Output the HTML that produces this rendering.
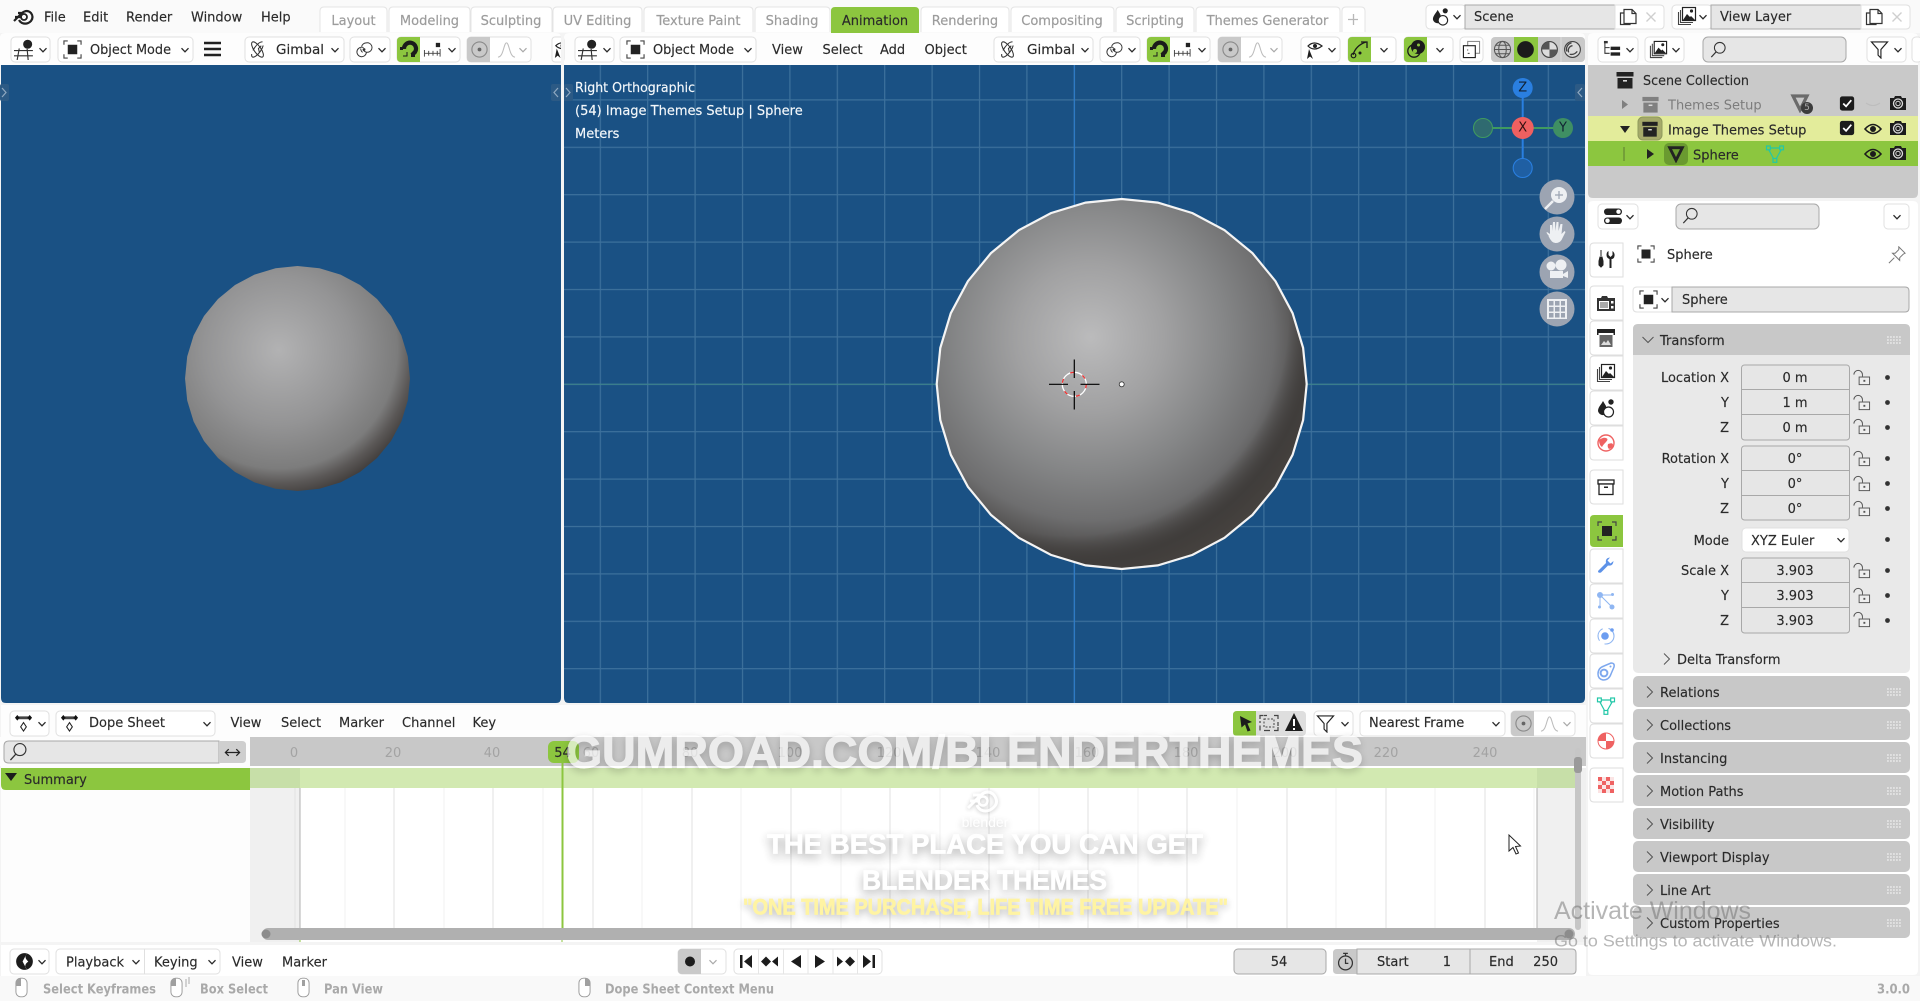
<!DOCTYPE html>
<html lang="en"><head><meta charset="utf-8"><title>Blender</title>
<style>
html,body{margin:0;padding:0;background:#f4f4f4;width:1920px;height:1001px;overflow:hidden}
svg.page{position:absolute;left:0;top:0;filter:blur(.3px)}
text{font-family:"DejaVu Sans","Liberation Sans",sans-serif;font-size:13px;fill:#2a2a2a;dominant-baseline:central;stroke:#2a2a2a;stroke-width:.15;transform:translate(0,1.3px)}
.g{fill:#a0a0a0}.tab{fill:#9c9c9c;stroke:#9c9c9c;stroke-width:.2}.w{fill:#f4f8fb;stroke:#f4f8fb}.m{text-anchor:middle}.e{text-anchor:end}
.st{fill:#a9a9a9;stroke:none}.n{fill:#a3a3a3;stroke:none;text-anchor:middle}
.ns{stroke:none}
.nt{transform:none}
.b{fill:#fff;stroke:#e0e0e0;stroke-width:1}
.f{fill:#e6e6e6;stroke:#a8a8a8;stroke-width:1}
.p{fill:#c8c8c8}.pg{fill:#8cc63f}.gy{fill:#c9c9c9}
.s{fill:none;stroke:#2a2a2a;stroke-width:1.3}
.wm{font-family:"Liberation Sans",sans-serif;font-weight:bold;fill:#fff;stroke:#fff;stroke-width:.7;filter:drop-shadow(0 3px 4px rgba(0,0,0,.3));transform:none}
</style></head><body>
<svg class="page" width="1920" height="1001" viewBox="0 0 1920 1001" xmlns="http://www.w3.org/2000/svg">
<defs>
<pattern id="grid" patternUnits="userSpaceOnUse" x="1073.7" y="383.7" width="47.4" height="47.4"><rect width="1.2" height="47.4" fill="#3d719c"/><rect width="47.4" height="1.2" fill="#3d719c"/></pattern>
<radialGradient id="sph" cx=".416" cy=".373" r=".66"><stop offset="0" stop-color="#bbbbbc"/><stop offset=".3" stop-color="#a1a1a2"/><stop offset=".55" stop-color="#858687"/><stop offset=".75" stop-color="#6e6e6f"/><stop offset=".88" stop-color="#4d4b4a"/><stop offset="1" stop-color="#373431"/></radialGradient>
<radialGradient id="sph2" cx=".36" cy=".32" r=".72"><stop offset=".82" stop-color="#3b3836" stop-opacity="0"/><stop offset=".92" stop-color="#3f3c3a" stop-opacity=".92"/><stop offset="1" stop-color="#46423f"/></radialGradient>
<radialGradient id="sphL" cx=".416" cy=".373" r=".66"><stop offset="0" stop-color="#b2b2b3"/><stop offset=".5" stop-color="#949495"/><stop offset=".8" stop-color="#7c7c7c"/><stop offset=".9" stop-color="#5a5756"/><stop offset="1" stop-color="#3f3b39"/></radialGradient>
<polygon id="gon" points="185,0 181.4,36.1 170.9,70.8 153.8,102.8 130.8,130.8 102.8,153.8 70.8,170.9 36.1,181.4 0,185 -36.1,181.4 -70.8,170.9 -102.8,153.8 -130.8,130.8 -153.8,102.8 -170.9,70.8 -181.4,36.1 -185,0 -181.4,-36.1 -170.9,-70.8 -153.8,-102.8 -130.8,-130.8 -102.8,-153.8 -70.8,-170.9 -36.1,-181.4 0,-185 36.1,-181.4 70.8,-170.9 102.8,-153.8 130.8,-130.8 153.8,-102.8 170.9,-70.8 181.4,-36.1"/>
<path id="gl" d="M4 0h19v25h-19q-4 0-4-4v-17q0-4 4-4z"/>
<path id="tabp" d="M33 0h-29q-4 0-4 4v26q0 4 4 4h29z" fill="#fff" stroke="#dedede"/>
<symbol id="ch" viewBox="0 0 10 10"><path d="M1.5 3.2 5 6.8 8.5 3.2" fill="none" stroke="#2a2a2a" stroke-width="1.3"/></symbol>
<symbol id="chg" viewBox="0 0 10 10"><path d="M1.5 3.2 5 6.8 8.5 3.2" fill="none" stroke="#a9a9a9" stroke-width="1.2"/></symbol>
<symbol id="cr" viewBox="0 0 12 12"><path d="M3 .5 8.5 6 3 11.5" fill="none" stroke="#555" stroke-width="1"/></symbol>
<symbol id="cd" viewBox="0 0 12 12"><path d="M.5 3 6 8.5 11.5 3" fill="none" stroke="#555" stroke-width="1"/></symbol>
<symbol id="obj" viewBox="0 0 20 20"><rect x="5" y="5" width="10" height="10" fill="#222"/><path d="M1 5V1h4M15 1h4v4M19 15v4h-4M5 19H1v-4" fill="none" stroke="#444" stroke-width="1.2"/></symbol>
<symbol id="e3d" viewBox="0 0 20 20"><circle cx="13" cy="5" r="4.300" fill="#222"/><path d="M0 11h18M0 16h18M5 9 3 20M12.500 9.500l1 10.500" fill="none" stroke="#333" stroke-width="1.100"/></symbol>
<symbol id="gim" viewBox="0 0 20 20"><g fill="none" stroke="#333" stroke-width="1.1"><ellipse cx="10" cy="10" rx="3.6" ry="9.500" transform="rotate(-35 10 10)"/><ellipse cx="10" cy="10" rx="3.6" ry="9.500" transform="rotate(35 10 10)" stroke-dasharray="14 4"/><path d="M14 6 11 9l1 4"/></g></symbol>
<symbol id="piv" viewBox="0 0 20 20"><g fill="none" stroke="#333" stroke-width="1"><path d="M9 8A5 5 0 1 0 12 13"/><path d="M8 13A5 5 0 0 1 6 9M9 11a5 5 0 1 0 3-8 5 5 0 0 0-5 4"/></g><circle cx="9.500" cy="10" r="1.500" fill="#333"/></symbol>
<symbol id="mag" viewBox="0 0 20 20"><path d="M5 10a6 6 0 1 1 11 3l-3 3" fill="none" stroke="#1b1b1b" stroke-width="4.200"/><path d="M1 8h3v3H1zM12 14h4v4h-4z" fill="#1b1b1b"/><path d="M4 17h4v-4" fill="none" stroke="#1b1b1b" stroke-width="1"/></symbol>
<symbol id="inc" viewBox="0 0 20 20"><path d="M1 14h17M1.500 10.500v7M6 11.500v5M10.500 11.500v5M15 11.500v5M18 9.500v8" fill="none" stroke="#444" stroke-width="1"/><rect x="13.500" y="3" width="4.500" height="4.500" fill="#222"/></symbol>
<symbol id="pd" viewBox="0 0 20 20"><circle cx="10" cy="10" r="8" fill="none" stroke="#8a8a8a" stroke-width="1.200"/><circle cx="10" cy="10" r="2" fill="#666"/></symbol>
<symbol id="cur" viewBox="0 0 20 20"><path d="M1 18C7 18 7 3 10 3s3 15 9 15" fill="none" stroke="#bcbcbc" stroke-width="1.100"/></symbol>
<symbol id="eye0" viewBox="0 0 20 20"><path d="M5 9 3 19l3-2.500 3 2.500z" fill="#1e1e1e"/><path d="M4 6q6-6 14 0-8 6-14 0z" fill="#fff" stroke="#222" stroke-width="1.200"/><circle cx="11" cy="6" r="2" fill="#222"/></symbol>
<symbol id="giz" viewBox="0 0 20 20"><path d="M3 16C5 9 10 5 16 3" fill="none" stroke="#1b1b1b" stroke-width="1.300"/><path d="M11 3h6v6" fill="none" stroke="#1b1b1b" stroke-width="1.300"/><circle cx="3.500" cy="16.500" r="2.300" fill="none" stroke="#1b1b1b" stroke-width="1.200"/><circle cx="10" cy="14" r="1.500" fill="#1b1b1b"/></symbol>
<symbol id="ovl" viewBox="0 0 20 20"><circle cx="12" cy="8" r="7" fill="#1b1b1b"/><circle cx="8" cy="12" r="6.200" fill="none" stroke="#1b1b1b" stroke-width="1.300"/><circle cx="12.500" cy="6" r="1.500" fill="#8cc63f"/><circle cx="9" cy="12" r="2" fill="#8cc63f"/></symbol>
<symbol id="xr" viewBox="0 0 20 20"><rect x="6" y="1.500" width="12.500" height="12.500" fill="none" stroke="#888" stroke-width="1.100"/><rect x="1.500" y="6" width="12.500" height="12.500" fill="#fff" stroke="#222" stroke-width="1.200"/><path d="M6 10v1M6 14h2" stroke="#222"/></symbol>
<symbol id="sw" viewBox="0 0 20 20"><g fill="none" stroke="#555" stroke-width="1.100"><circle cx="10" cy="10" r="8.500"/><ellipse cx="10" cy="10" rx="4" ry="8.500"/><path d="M1.500 10h17M3 5.500h14M3 14.500h14"/></g></symbol>
<symbol id="ss" viewBox="0 0 20 20"><circle cx="10" cy="10" r="8.800" fill="#1b1b1b"/></symbol>
<symbol id="sm" viewBox="0 0 20 20"><circle cx="10" cy="10" r="8.300" fill="#dcdcdc" stroke="#444" stroke-width="1.200"/><path d="M10 1.700A8.300 8.300 0 0 0 1.700 10H10zM10 10h8.300A8.300 8.300 0 0 1 10 18.300z" fill="#555"/></symbol>
<symbol id="sr" viewBox="0 0 20 20"><circle cx="10" cy="10" r="8.300" fill="#ddd" stroke="#444" stroke-width="1.200"/><path d="M4 12a7 7 0 0 1 5-9M6 13a5 5 0 0 1 4-7M7 15a8 8 0 0 0 8-3" fill="none" stroke="#444" stroke-width="1.400"/></symbol>
<symbol id="sce" viewBox="0 0 20 20"><path d="M7 3C5 7 2 9 2 13a5 5 0 0 0 8 3V8z" fill="#222"/><circle cx="15" cy="4" r="2.700" fill="#222"/><circle cx="12.500" cy="14" r="5" fill="#fff" stroke="#222" stroke-width="1.200"/></symbol>
<symbol id="cp" viewBox="0 0 20 20"><path d="M6 2.500h8l4 4v10h-12zM14 2.500v4h4M6 6H2.500v11.500H12V17" fill="#fff" stroke="#333" stroke-width="1.200"/></symbol>
<symbol id="x" viewBox="0 0 20 20"><path d="M5 5l10 10M15 5 5 15" stroke="#cfcfcf" stroke-width="1.500"/></symbol>
<symbol id="vl" viewBox="0 0 20 20"><path d="M1.500 6v12.500H14M3.500 4v12.500H16" fill="none" stroke="#444" stroke-width="1.100"/><rect x="5.500" y="1.500" width="13" height="13" fill="#fff" stroke="#222" stroke-width="1.200"/><path d="M6 14l4-6 3 3 1-1 4 4z" fill="#222"/><circle cx="14.500" cy="5" r="1.600" fill="#222"/></symbol>
<symbol id="srch" viewBox="0 0 20 20"><circle cx="11.500" cy="8" r="6.300" fill="none" stroke="#333" stroke-width="1.200"/><path d="M7 13 1.500 19" stroke="#333" stroke-width="1.400"/></symbol>
<symbol id="flt" viewBox="0 0 20 20"><path d="M1.500 2h17l-7 8v9l-3-3v-6z" fill="#fff" stroke="#222" stroke-width="1.200"/></symbol>
<symbol id="otl" viewBox="0 0 20 20"><path d="M2 2v12h5M2 8h5" fill="none" stroke="#333" stroke-width="1.100"/><rect x="1" y="1" width="4" height="2.500" fill="#333"/><rect x="8" y="7" width="10" height="3.500" fill="#222"/><rect x="8" y="13" width="10" height="3.500" fill="#222"/></symbol>
<symbol id="col" viewBox="0 0 20 20"><rect x="1.500" y="2" width="17" height="4.500" fill="currentColor"/><rect x="2.500" y="8" width="15" height="10.500" fill="currentColor"/><rect x="8" y="10" width="4" height="1.600" fill="#d9d9d9"/></symbol>
<symbol id="tri" viewBox="0 0 20 20"><path d="M3 3h14l-7 14z" fill="none" stroke="currentColor" stroke-width="3.200"/></symbol>
<symbol id="mesh" viewBox="0 0 20 20"><g fill="none" stroke="#22c7a8" stroke-width="1.200"><rect x="1.500" y="2" width="3.800" height="3.800"/><rect x="14.700" y="2" width="3.800" height="3.800"/><rect x="8" y="14.500" width="3.800" height="3.800"/><path d="M5.300 4h9.400M3.800 5.800 8.500 14.500M16.200 5.800 11.300 14.500"/></g></symbol>
<symbol id="eye" viewBox="0 0 20 20"><path d="M2 10q8-9 16 0-8 9-16 0z" fill="none" stroke="#1c1c1c" stroke-width="1.600"/><circle cx="10" cy="10" r="3" fill="#1c1c1c"/></symbol>
<symbol id="cam" viewBox="0 0 20 20"><path d="M2 5h4l1-2h6l1 2h4v12H2z" fill="#1c1c1c"/><circle cx="10" cy="10.500" r="4.500" fill="none" stroke="#ddd" stroke-width="1.300"/><circle cx="10" cy="10.500" r="2.200" fill="none" stroke="#ddd" stroke-width="1"/></symbol>
<symbol id="chk" viewBox="0 0 20 20"><rect x="2" y="2.500" width="15" height="15" rx="2.500" fill="#1c1c1c"/><path d="M5.500 10l3 3 5.500-6.500" fill="none" stroke="#fff" stroke-width="1.800"/></symbol>
<symbol id="lock" viewBox="0 0 20 20"><path d="M2 7a4.500 4.500 0 0 1 9 0v2" fill="none" stroke="#555" stroke-width="1"/><rect x="7.500" y="9.500" width="11" height="8" fill="#eee" stroke="#555" stroke-width="1"/><rect x="12" y="12.500" width="2" height="2" fill="#555"/></symbol>
<symbol id="grip" viewBox="0 0 16 8"><path d="M1 1h14M1 4h14M1 7h14" stroke="#efefef" stroke-width="1.200" stroke-dasharray="1.800 1.200" fill="none"/></symbol>
<symbol id="tog" viewBox="0 0 20 20"><rect x="1" y="2.500" width="18" height="6.500" rx="3.200" fill="#222"/><circle cx="15.500" cy="5.700" r="2.200" fill="#fff"/><rect x="1" y="11.500" width="18" height="6.500" rx="3.200" fill="#222"/><circle cx="4.500" cy="14.700" r="2.200" fill="#fff"/></symbol>
<symbol id="pin" viewBox="0 0 20 20"><path d="M1 19l6-6M12 1l7 7-2 1-4 4v3L5 8h3l4-4z" fill="none" stroke="#777" stroke-width="1.100"/></symbol>
<symbol id="tool" viewBox="0 0 20 20"><path d="M5 1v6M4 8h2l1 4v4l-2 2-2-2v-4z" fill="#222" stroke="#222"/><path d="M12.500 2v4l2 2 2-2V2q2.500 2 2 5t-3 3v9h-2v-9q-3-1-3-4t2-4z" fill="#222"/></symbol>
<symbol id="rnd" viewBox="0 0 20 20"><path d="M1 5h4l1-2h5l1 2h7v13H1z" fill="#333"/><rect x="3" y="8" width="10" height="8" fill="#fff"/><path d="M4 10h8M4 12h8M4 14h8" stroke="#555"/><rect x="15" y="8" width="2.500" height="2.500" fill="#fff"/><rect x="15" y="13" width="2.500" height="2.500" fill="#fff"/></symbol>
<symbol id="out" viewBox="0 0 20 20"><path d="M1 1h18v6h-1.500v-2h-15v2H1z" fill="#222"/><rect x="3.500" y="7" width="13" height="12" fill="#666"/><path d="M5 17l3-4 2 2 2-3 3 5z" fill="#ddd"/></symbol>
<symbol id="colt" viewBox="0 0 20 20"><rect x="2" y="3" width="16" height="4" fill="none" stroke="#222" stroke-width="1.300"/><rect x="3" y="7" width="14" height="10.500" fill="#fff" stroke="#222" stroke-width="1.300"/><rect x="8" y="9.500" width="4" height="1.500" fill="#222"/></symbol>
<symbol id="wld" viewBox="0 0 20 20"><circle cx="10" cy="10" r="8" fill="none" stroke="#ef6262" stroke-width="1.400"/><path d="M3 7q4-3 7-2t0 4-4 5q-3-2-3-7zM12 11q5-2 5 1t-4 4q-2-2-1-5z" fill="#ef6262"/></symbol>
<symbol id="mod" viewBox="0 0 20 20"><path d="M2 15l8-8q-1-5 4-5.500L11.500 4.500l3 3 3-2.500Q17 10.500 12 9.500l-7 7q-3 1-3-1.500z" fill="#5d92e8"/></symbol>
<symbol id="par" viewBox="0 0 20 20"><g fill="#8fb6f2"><circle cx="4" cy="4" r="3"/><circle cx="16.500" cy="3.500" r="1.500"/><circle cx="3.500" cy="16" r="1.500"/><circle cx="16" cy="16" r="2.500"/></g><path d="M4 4h12M4 4v12M4 4l12 12" stroke="#8fb6f2" stroke-width="1"/></symbol>
<symbol id="phy" viewBox="0 0 20 20"><circle cx="10" cy="10" r="8" fill="none" stroke="#8fb6f2" stroke-width="1.100" stroke-dasharray="14 6"/><circle cx="9" cy="10" r="3.800" fill="#6c9df0"/><circle cx="16" cy="4" r="1.800" fill="#6c9df0"/></symbol>
<symbol id="con" viewBox="0 0 20 20"><path d="M2 13q0-6 6-8l7-3q4 0 3 4l-3 7q-2 6-8 6-5-1-5-6z" fill="none" stroke="#7ea8ee" stroke-width="1.500"/><circle cx="8" cy="12" r="3.400" fill="none" stroke="#7ea8ee" stroke-width="2"/><circle cx="14.500" cy="5.500" r="1" fill="#7ea8ee"/></symbol>
<symbol id="mat" viewBox="0 0 20 20"><circle cx="10" cy="10" r="8.500" fill="#ef6262"/><path d="M10 10V2.500a7.500 7.500 0 0 1 7.500 7.500zM10 10H2.500A7.500 7.500 0 0 0 10 17.500z" fill="#fff"/></symbol>
<symbol id="tex" viewBox="0 0 20 20"><rect x="2" y="2" width="16" height="16" fill="#ef6262"/><path d="M6 2h4v4H6zM14 2h4v4h-4zM2 6h4v4H2zM10 6h4v4h-4zM6 10h4v4H6zM14 10h4v4h-4zM2 14h4v4H2zM10 14h4v4h-4z" fill="#fbe4e4"/></symbol>
<symbol id="dope" viewBox="0 0 20 20"><rect x="5" y="2.500" width="10" height="3" fill="#444"/><path d="M3.500 1 6 4 3.500 7 1 4zM16.500 1 19 4 16.500 7 14 4z" fill="#111"/><path d="M10 9l3 4.500L10 18l-3-4.500z" fill="#fff" stroke="#222" stroke-width="1.100"/></symbol>
<symbol id="arr" viewBox="0 0 20 20"><path d="M2.500 10h15M6 6.500 2.500 10 6 13.500M14 6.500l3.500 3.500-3.500 3.500" fill="none" stroke="#222" stroke-width="1.300"/></symbol>
<symbol id="tl" viewBox="0 0 20 20"><circle cx="10" cy="10" r="8.800" fill="#1c1c1c"/><path d="M12.500 1.500 8 10l4.500 8.500Q8.500 14 14 10q-5-4-1.500-8.500z" fill="#fff"/></symbol>
<symbol id="tmr" viewBox="0 0 20 20"><circle cx="10" cy="11.500" r="7.300" fill="none" stroke="#333" stroke-width="1.300"/><path d="M10 7v5h3M7.500 1.500h5M10 1.500v2.500" fill="none" stroke="#333" stroke-width="1.300"/></symbol>
<symbol id="ms" viewBox="0 0 14 22"><rect x="1" y="1" width="12" height="20" rx="5" fill="#fff" stroke="#999" stroke-width="1"/></symbol>
</defs>

<!-- top bar -->
<rect width="1920" height="33" fill="#fafafa"/>
<g fill="#fff" stroke="#e4e4e4"><path d="M320 32V11q0-4 4-4h59q4 0 4 4v21"/><path d="M389 32V11q0-4 4-4h73q4 0 4 4v21"/><path d="M471 32V11q0-4 4-4h73q4 0 4 4v21"/><path d="M553 32V11q0-4 4-4h81q4 0 4 4v21"/><path d="M644 32V11q0-4 4-4h101q4 0 4 4v21"/><path d="M755 32V11q0-4 4-4h67q4 0 4 4v21"/><path d="M921 32V11q0-4 4-4h80q4 0 4 4v21"/><path d="M1011 32V11q0-4 4-4h95q4 0 4 4v21"/><path d="M1116 32V11q0-4 4-4h70q4 0 4 4v21"/><path d="M1196 32V11q0-4 4-4h136q4 0 4 4v21"/><path d="M1342 32V11q0-4 4-4h15q4 0 4 4v21"/></g>
<path d="M831 33V11q0-4 4-4h80q4 0 4 4v22z" fill="#8cc63f"/>
<text class="tab m" x="353.500" y="20">Layout</text><text class="tab m" x="429.500" y="20">Modeling</text><text class="tab m" x="511" y="20">Sculpting</text><text class="tab m" x="597.500" y="20">UV Editing</text><text class="tab m" x="698.500" y="20">Texture Paint</text><text class="tab m" x="792" y="20">Shading</text><text class="m" x="875" y="20">Animation</text><text class="tab m" x="965" y="20">Rendering</text><text class="tab m" x="1062" y="20">Compositing</text><text class="tab m" x="1155" y="20">Scripting</text><text class="tab m" x="1267.500" y="20">Themes Generator</text>
<path d="M1348 19.500h10M1353.500 14v11" stroke="#b8b8b8" stroke-width="1.300"/>
<g transform="translate(13,8)"><circle cx="11" cy="9" r="3" fill="none" stroke="#222" stroke-width="1.800"/><path d="M2 9h7M5 5l4 0M1 13 9 5q5-4 9 0 3 4 0 8-4 4-9 2-2-1-3-3" fill="none" stroke="#222" stroke-width="2.200"/></g>
<text x="44" y="16.500">File</text><text x="83" y="16.500">Edit</text><text x="126" y="16.500">Render</text><text x="191" y="16.500">Window</text><text x="261" y="16.500">Help</text>
<rect class="b" x="1426" y="5" width="40" height="24" rx="4"/><use href="#sce" x="1431" y="7" width="19" height="19"/><use href="#ch" x="1452" y="12" width="10" height="10"/>
<rect class="f" x="1465" y="5" width="150" height="24"/><text x="1474" y="16">Scene</text>
<path d="M1615 5h45q4 0 4 4v16q0 4-4 4h-45z" fill="#fff" stroke="#e0e0e0"/><use href="#cp" x="1618" y="7" width="20" height="20"/><use href="#x" x="1642" y="8" width="18" height="18"/>
<rect class="b" x="1672" y="5" width="40" height="24" rx="4"/><use href="#vl" x="1677" y="6" width="20" height="20"/><use href="#ch" x="1698" y="12" width="10" height="10"/>
<rect class="f" x="1711" y="5" width="150" height="24"/><text x="1720" y="16">View Layer</text>
<path d="M1861 5h45q4 0 4 4v16q0 4-4 4h-45z" fill="#fff" stroke="#e0e0e0"/><use href="#cp" x="1864" y="7" width="20" height="20"/><use href="#x" x="1888" y="8" width="18" height="18"/>

<!-- headers -->
<path d="M0 65V38q0-5 5-5h551q5 0 5 5v27z" fill="#fdfdfd"/>
<path d="M564 65V38q0-5 5-5h1011q5 0 5 5v27z" fill="#fdfdfd"/>
<path d="M1588 65V38q0-5 5-5h320q5 0 5 5v27z" fill="#fdfdfd"/>

<!-- left viewport -->
<path d="M1 65h560v633q0 5-5 5H6q-5 0-5-5z" fill="#1a5184"/>
<use href="#gon" fill="url(#sphL)" transform="translate(297.500,378.500) scale(.608)"/>
<!-- left header controls -->
<rect class="b" x="11" y="37" width="39" height="25" rx="4"/><use href="#e3d" x="14" y="39" width="21" height="21"/><use href="#ch" x="38" y="45" width="10" height="10"/>
<rect class="b" x="58" y="37" width="135" height="25" rx="4"/><use href="#obj" x="63" y="40" width="19" height="19"/><text x="90" y="49" textLength="81" lengthAdjust="spacingAndGlyphs">Object Mode</text><use href="#ch" x="180" y="45" width="10" height="10"/>
<path d="M204 43h17M204 49h17M204 55h17" stroke="#222" stroke-width="2.400"/>
<rect class="b" x="245" y="37" width="99" height="25" rx="4"/><use href="#gim" x="248" y="40" width="19" height="19"/><text x="276" y="49" textLength="48" lengthAdjust="spacingAndGlyphs">Gimbal</text><use href="#ch" x="330" y="45" width="10" height="10"/>
<rect class="b" x="350" y="37" width="40" height="25" rx="4"/><use href="#piv" x="355" y="40" width="19" height="19"/><use href="#ch" x="377" y="45" width="10" height="10"/>
<rect class="b" x="397" y="37" width="63" height="25" rx="4"/><use href="#gl" class="pg" x="397" y="37"/><use href="#mag" x="399" y="39" width="20" height="20"/><use href="#inc" x="423" y="40" width="19" height="19"/><use href="#ch" x="447" y="45" width="10" height="10"/>
<rect class="b" x="467" y="37" width="64" height="25" rx="4"/><use href="#gl" class="gy" x="467" y="37"/><use href="#pd" x="470" y="40" width="19" height="19"/><use href="#cur" x="497" y="40" width="19" height="19"/><use href="#chg" x="518" y="45" width="10" height="10"/>
<rect class="b" x="552" y="37" width="12" height="25" rx="3"/>
<rect x="561" y="33" width="3" height="32" fill="#f4f4f4"/>
<svg x="552" y="37" width="9" height="25"><use href="#eye0" x="0" y="3" width="19" height="19"/></svg>

<!-- right viewport -->
<path d="M564 65h1021v633q0 5-5 5H569q-5 0-5-5z" fill="#1a5184"/>
<path d="M564 65h1021v633q0 5-5 5H569q-5 0-5-5z" fill="url(#grid)"/>
<path d="M1074.300 65V703" stroke="#2e7fd0" stroke-width="1"/><path d="M564 384.300H1585" stroke="#3d8589" stroke-width="1"/>
<use href="#gon" fill="url(#sph)" transform="translate(1121.700,384)"/><use href="#gon" fill="url(#sph2)" transform="translate(1121.700,384)"/>
<use href="#gon" fill="none" stroke="#f4f4f4" stroke-width="2.200" transform="translate(1121.700,384)"/>
<circle cx="1074.300" cy="384.300" r="12" fill="none" stroke="#fff" stroke-width="1.300"/><circle cx="1074.300" cy="384.300" r="12" fill="none" stroke="#f03030" stroke-width="1.300" stroke-dasharray="4 9"/>
<path d="M1049 384.300h19M1080.500 384.300h19M1074.300 359.500v18.500M1074.300 391v18.500" stroke="#000" stroke-width="1.200"/>
<circle cx="1121.700" cy="384.300" r="2.500" fill="#fff" stroke="#333" stroke-width=".8"/>
<text class="w" x="575" y="87" textLength="120" lengthAdjust="spacingAndGlyphs">Right Orthographic</text><text class="w" x="575" y="110">(54) Image Themes Setup | Sphere</text><text class="w" x="575" y="133">Meters</text>
<!-- handles -->
<rect x="0" y="84" width="9" height="17" rx="2" fill="#2c5a85"/><path d="M2 88l4 4.500-4 4.500" fill="none" stroke="#8fa8c0" stroke-width="1.200"/>
<rect x="551" y="84" width="10" height="17" rx="2" fill="#2c5a85"/><path d="M558 88l-4 4.500 4 4.500" fill="none" stroke="#8fa8c0" stroke-width="1.200"/>
<rect x="564" y="84" width="9" height="17" rx="2" fill="#2c5a85"/><path d="M566 88l4 4.500-4 4.500" fill="none" stroke="#8fa8c0" stroke-width="1.200"/>
<rect x="1575" y="84" width="10" height="17" rx="2" fill="#2c5a85"/><path d="M1582 88l-4 4.500 4 4.500" fill="none" stroke="#8fa8c0" stroke-width="1.200"/>
<!-- gizmo -->
<path d="M1522.700 88V168" stroke="#2a7fe0" stroke-width="2"/><path d="M1483 128H1563" stroke="#3f9a60" stroke-width="2"/>
<circle cx="1522.700" cy="88" r="10" fill="#2a7fe0"/><text class="m ns nt" x="1522.700" y="88" style="font-size:13px;fill:#123">Z</text>
<circle cx="1522.700" cy="168" r="9.500" fill="#1f5fa3" stroke="#2a7fe0" stroke-width="1.100"/>
<circle cx="1483" cy="128" r="9.500" fill="#2f6a70" stroke="#3f9a60" stroke-width="1.100"/>
<circle cx="1563" cy="128" r="10" fill="#3f8f63"/><text class="m ns nt" x="1563" y="128" style="font-size:13px;fill:#123">Y</text>
<circle cx="1522.700" cy="128" r="11" fill="#ef6060"/><text class="m ns nt" x="1522.700" y="128" style="font-size:13px;fill:#311">X</text>
<!-- nav -->
<g fill="#9ca4b2"><circle cx="1557" cy="197" r="17.500"/><circle cx="1557" cy="234" r="17.500"/><circle cx="1557" cy="272" r="17.500"/><circle cx="1557" cy="309" r="17.500"/></g>
<g fill="#eef0f3"><circle cx="1559" cy="195" r="8"/><path d="M1553 201l-8 8" stroke="#eef0f3" stroke-width="2.500"/><path d="M1555 195h8M1559 191v8" stroke="#9ca4b2" stroke-width="1.200"/>
<path d="M1549 236c-2-2-3-4-2-4l3 2v-9h2v6l1-9h2l.5 9 1-9h2v9l2-7h2l-1 10 3-3 1 1-4 8q-2 3-6 3-4 0-7-7z"/>
<circle cx="1551" cy="266" r="4.500"/><circle cx="1561" cy="265" r="5.500"/><rect x="1550" y="271" width="13" height="7"/><path d="M1563 274l5-3v7l-5-2z"/>
<path fill-rule="evenodd" d="M1547 299h20v20h-20zM1549 301v4.500h4.500V301zM1555 301v4.500h4.500V301zM1561 301v4.500h4V301zM1549 307v4.500h4.500V307zM1555 307v4.500h4.500V307zM1561 307v4.500h4V307zM1549 313v4.500h4.500V313zM1555 313v4.500h4.500V313zM1561 313v4.500h4V313z"/></g>
<!-- right header controls -->
<rect class="b" x="575" y="37" width="39" height="25" rx="4"/><use href="#e3d" x="578" y="39" width="21" height="21"/><use href="#ch" x="602" y="45" width="10" height="10"/>
<rect class="b" x="620" y="37" width="136" height="25" rx="4"/><use href="#obj" x="626" y="40" width="19" height="19"/><text x="653" y="49" textLength="81" lengthAdjust="spacingAndGlyphs">Object Mode</text><use href="#ch" x="743" y="45" width="10" height="10"/>
<text x="772" y="49">View</text><text x="822.500" y="49">Select</text><text x="880" y="49">Add</text><text x="924.500" y="49">Object</text>
<rect class="b" x="994" y="37" width="99" height="25" rx="4"/><use href="#gim" x="998" y="40" width="19" height="19"/><text x="1027" y="49" textLength="48" lengthAdjust="spacingAndGlyphs">Gimbal</text><use href="#ch" x="1080" y="45" width="10" height="10"/>
<rect class="b" x="1100" y="37" width="40" height="25" rx="4"/><use href="#piv" x="1105" y="40" width="19" height="19"/><use href="#ch" x="1127" y="45" width="10" height="10"/>
<rect class="b" x="1147" y="37" width="63" height="25" rx="4"/><use href="#gl" class="pg" x="1147" y="37"/><use href="#mag" x="1149" y="39" width="20" height="20"/><use href="#inc" x="1173" y="40" width="19" height="19"/><use href="#ch" x="1197" y="45" width="10" height="10"/>
<rect class="b" x="1218" y="37" width="64" height="25" rx="4"/><use href="#gl" class="gy" x="1218" y="37"/><use href="#pd" x="1221" y="40" width="19" height="19"/><use href="#cur" x="1248" y="40" width="19" height="19"/><use href="#chg" x="1269" y="45" width="10" height="10"/>
<rect class="b" x="1301" y="37" width="39" height="25" rx="4"/><use href="#eye0" x="1304" y="40" width="20" height="20"/><use href="#ch" x="1327" y="45" width="10" height="10"/>
<rect class="b" x="1348" y="37" width="48" height="25" rx="4"/><use href="#gl" class="pg" x="1348" y="37"/><use href="#giz" x="1350" y="39" width="20" height="20"/><use href="#ch" x="1379" y="45" width="10" height="10"/>
<rect class="b" x="1404" y="37" width="49" height="25" rx="4"/><use href="#gl" class="pg" x="1404" y="37"/><use href="#ovl" x="1406" y="39" width="20" height="20"/><use href="#ch" x="1435" y="45" width="10" height="10"/>
<rect class="b" x="1460" y="37" width="23" height="25" rx="4"/><use href="#xr" x="1462" y="40" width="19" height="19"/>
<rect x="1491" y="37" width="94" height="25" rx="4" fill="#c9c9c9"/><rect x="1514" y="37" width="24" height="25" fill="#8cc63f"/><path d="M1561 37v25" stroke="#dcdcdc"/>
<use href="#sw" x="1493" y="40" width="19" height="19"/><use href="#ss" x="1516" y="40" width="19" height="19"/><use href="#sm" x="1540" y="40" width="19" height="19"/><use href="#sr" x="1563" y="40" width="19" height="19"/>

<!-- outliner header -->
<rect class="b" x="1598" y="37" width="40" height="25" rx="4"/><use href="#otl" x="1603" y="40" width="19" height="19"/><use href="#ch" x="1625" y="45" width="10" height="10"/>
<rect class="b" x="1645" y="37" width="39" height="25" rx="4"/><use href="#vl" x="1649" y="40" width="19" height="19"/><use href="#ch" x="1671" y="45" width="10" height="10"/>
<rect class="f" x="1703" y="37" width="143" height="25" rx="5"/><use href="#srch" x="1710" y="41" width="17" height="17"/>
<rect class="b" x="1867" y="37" width="39" height="25" rx="4"/><use href="#flt" x="1870" y="40" width="19" height="19"/><use href="#ch" x="1893" y="45" width="10" height="10"/>
<rect class="b" x="1912" y="37" width="10" height="25" rx="4"/>
<!-- outliner -->
<path d="M1588 65h330v128q0 5-5 5h-320q-5 0-5-5z" fill="#c9c9c9"/>
<rect x="1588" y="116" width="330" height="25" fill="#e3ec9b"/><rect x="1588" y="141" width="330" height="25" fill="#8cc63f"/>
<use href="#col" x="1615" y="70" width="20" height="20" style="color:#222"/><text x="1643" y="80" textLength="106" lengthAdjust="spacingAndGlyphs">Scene Collection</text>
<path d="M1622 100l6 4.500-6 4.500z" fill="#808080"/><use href="#col" x="1641" y="95" width="19" height="19" style="color:#808080"/><text class="ns" x="1668" y="104.500" style="fill:#7c7c7c">Themes Setup</text>
<use href="#tri" x="1790" y="93" width="20" height="20" style="color:#6b6b6b"/><circle cx="1807" cy="108" r="6" fill="#3c3c3c"/><text class="m ns nt" x="1807" y="108" style="font-size:9px;fill:#aaa">5</text>
<use href="#chk" x="1838" y="94" width="19" height="19"/><path d="M1866 103q7 5 14 0" fill="none" stroke="#bdbdbd" stroke-width="1.100"/><use href="#cam" x="1888" y="93" width="20" height="20"/>
<path d="M1620 126h10l-5 7z" fill="#222"/><rect x="1638" y="117" width="24" height="23" rx="5" fill="#a5a96a" stroke="#8f9a5c"/><use href="#col" x="1641" y="120" width="18" height="18" style="color:#222"/><text x="1668" y="129.500">Image Themes Setup</text>
<use href="#chk" x="1838" y="118.500" width="19" height="19"/><use href="#eye" x="1863" y="119" width="20" height="20"/><use href="#cam" x="1888" y="118" width="20" height="20"/>
<path d="M1624 147v14" stroke="#5d7a30"/><path d="M1647 149l7 5-7 5z" fill="#222"/><rect x="1664" y="143" width="24" height="22" rx="5" fill="#6a9a30"/><use href="#tri" x="1667" y="145" width="18" height="18" style="color:#222"/><text x="1693" y="154.500">Sphere</text>
<use href="#mesh" x="1765" y="144" width="20" height="20"/><use href="#eye" x="1863" y="144" width="20" height="20"/><use href="#cam" x="1888" y="143" width="20" height="20"/>

<!-- properties -->
<path d="M1588 206q0-5 5-5h320q5 0 5 5v764q0 5-5 5h-320q-5 0-5-5z" fill="#fff"/>
<rect class="b" x="1598" y="204" width="40" height="25" rx="4"/><use href="#tog" x="1603" y="206" width="20" height="20"/><use href="#ch" x="1625" y="212" width="10" height="10"/>
<rect class="f" x="1676" y="204" width="143" height="25" rx="5"/><use href="#srch" x="1682" y="207" width="17" height="17"/>
<rect class="b" x="1884" y="204" width="25" height="25" rx="4"/><use href="#ch" x="1892" y="212" width="10" height="10"/>
<use href="#tabp" x="1590" y="243"/><use href="#tabp" x="1590" y="286"/><use href="#tabp" x="1590" y="321"/><use href="#tabp" x="1590" y="356"/><use href="#tabp" x="1590" y="391"/><use href="#tabp" x="1590" y="426"/><use href="#tabp" x="1590" y="470"/><use href="#tabp" x="1590" y="549"/><use href="#tabp" x="1590" y="584"/><use href="#tabp" x="1590" y="619"/><use href="#tabp" x="1590" y="654"/><use href="#tabp" x="1590" y="689"/><use href="#tabp" x="1590" y="724"/><use href="#tabp" x="1590" y="768"/>
<path d="M1623 515h-29q-4 0-4 4v24q0 4 4 4h29z" fill="#8cc63f"/>
<use href="#tool" x="1596" y="249" width="20" height="20"/><use href="#rnd" x="1596" y="293" width="20" height="20"/><use href="#out" x="1596" y="328" width="20" height="20"/><use href="#vl" x="1596" y="363" width="20" height="20"/><use href="#sce" x="1596" y="398" width="20" height="20"/><use href="#wld" x="1596" y="433" width="20" height="20"/><use href="#colt" x="1596" y="477" width="20" height="20"/><use href="#obj" x="1597" y="521" width="20" height="20"/><use href="#mod" x="1596" y="556" width="20" height="20"/><use href="#par" x="1596" y="591" width="20" height="20"/><use href="#phy" x="1596" y="626" width="20" height="20"/><use href="#con" x="1596" y="661" width="20" height="20"/><use href="#mesh" x="1596" y="696" width="20" height="20"/><use href="#mat" x="1596" y="731" width="20" height="20"/><use href="#tex" x="1596" y="775" width="20" height="20"/>
<use href="#obj" x="1637" y="245" width="18" height="18"/><text x="1667" y="254">Sphere</text><use href="#pin" x="1888" y="246" width="18" height="18"/>
<path d="M1672 287h-35q-4 0-4 4v17q0 4 4 4h35z" fill="#fff" stroke="#e0e0e0"/><use href="#obj" x="1639" y="290" width="19" height="19"/><use href="#ch" x="1660" y="295" width="10" height="10"/>
<path d="M1672 287h233q4 0 4 4v17q0 4-4 4h-233z" fill="#e6e6e6" stroke="#a8a8a8"/><text x="1682" y="299">Sphere</text>

<rect x="1633" y="324" width="277" height="349" rx="5" fill="#e9e9e9"/>
<path d="M1633 355v-26q0-5 5-5h267q5 0 5 5v26z" fill="#c8c8c8"/><use href="#cd" x="1642" y="334" width="12" height="12"/><text x="1660" y="340">Transform</text><use href="#grip" x="1886" y="336" width="16" height="8"/>
<g><text class="e" x="1729" y="377">Location X</text><text class="e" x="1729" y="402">Y</text><text class="e" x="1729" y="427">Z</text><text class="e" x="1729" y="458">Rotation X</text><text class="e" x="1729" y="483">Y</text><text class="e" x="1729" y="508">Z</text><text class="e" x="1729" y="540">Mode</text><text class="e" x="1729" y="570">Scale X</text><text class="e" x="1729" y="595">Y</text><text class="e" x="1729" y="620">Z</text></g>
<rect class="f" x="1741.500" y="365" width="108" height="75" rx="3"/><path d="M1741.500 389.500h108M1741.500 414.500h108" stroke="#a8a8a8"/>
<rect class="f" x="1741.500" y="446" width="108" height="74" rx="3"/><path d="M1741.500 470.500h108M1741.500 495.500h108" stroke="#a8a8a8"/>
<rect class="f" x="1741.500" y="558" width="108" height="75" rx="3"/><path d="M1741.500 582.500h108M1741.500 607.500h108" stroke="#a8a8a8"/>
<text class="m" x="1795" y="377">0 m</text><text class="m" x="1795" y="402">1 m</text><text class="m" x="1795" y="427">0 m</text><text class="m" x="1795" y="458">0°</text><text class="m" x="1795" y="483">0°</text><text class="m" x="1795" y="508">0°</text><text class="m" x="1795" y="570">3.903</text><text class="m" x="1795" y="595">3.903</text><text class="m" x="1795" y="620">3.903</text>
<rect class="b" x="1742" y="528" width="107" height="24" rx="4"/><text x="1751" y="540">XYZ Euler</text><use href="#ch" x="1836" y="535" width="10" height="10"/>
<g><use href="#lock" x="1852" y="368" width="19" height="19"/><use href="#lock" x="1852" y="393" width="19" height="19"/><use href="#lock" x="1852" y="417" width="19" height="19"/><use href="#lock" x="1852" y="449" width="19" height="19"/><use href="#lock" x="1852" y="474" width="19" height="19"/><use href="#lock" x="1852" y="499" width="19" height="19"/><use href="#lock" x="1852" y="561" width="19" height="19"/><use href="#lock" x="1852" y="586" width="19" height="19"/><use href="#lock" x="1852" y="610" width="19" height="19"/></g>
<g fill="#333"><circle cx="1887.500" cy="377.500" r="2.400"/><circle cx="1887.500" cy="402.500" r="2.400"/><circle cx="1887.500" cy="427.500" r="2.400"/><circle cx="1887.500" cy="458.500" r="2.400"/><circle cx="1887.500" cy="483.500" r="2.400"/><circle cx="1887.500" cy="508.500" r="2.400"/><circle cx="1887.500" cy="539.500" r="2.400"/><circle cx="1887.500" cy="570.500" r="2.400"/><circle cx="1887.500" cy="595.500" r="2.400"/><circle cx="1887.500" cy="620.500" r="2.400"/></g>
<use href="#cr" x="1661" y="653" width="12" height="12"/><text x="1677" y="659">Delta Transform</text>
<g class="p"><rect class="p" x="1633" y="676" width="277" height="31" rx="5"/><rect class="p" x="1633" y="709" width="277" height="31" rx="5"/><rect class="p" x="1633" y="742" width="277" height="31" rx="5"/><rect class="p" x="1633" y="775" width="277" height="31" rx="5"/><rect class="p" x="1633" y="808" width="277" height="31" rx="5"/><rect class="p" x="1633" y="841" width="277" height="31" rx="5"/><rect class="p" x="1633" y="874" width="277" height="31" rx="5"/><rect class="p" x="1633" y="907" width="277" height="31" rx="5"/></g>
<text x="1660" y="692">Relations</text><text x="1660" y="725">Collections</text><text x="1660" y="758">Instancing</text><text x="1660" y="791">Motion Paths</text><text x="1660" y="824">Visibility</text><text x="1660" y="857">Viewport Display</text><text x="1660" y="890">Line Art</text><text x="1660" y="923">Custom Properties</text>
<use href="#cr" x="1644" y="686" width="12" height="12"/><use href="#cr" x="1644" y="719" width="12" height="12"/><use href="#cr" x="1644" y="752" width="12" height="12"/><use href="#cr" x="1644" y="785" width="12" height="12"/><use href="#cr" x="1644" y="818" width="12" height="12"/><use href="#cr" x="1644" y="851" width="12" height="12"/><use href="#cr" x="1644" y="884" width="12" height="12"/><use href="#cr" x="1644" y="917" width="12" height="12"/>
<use href="#grip" x="1886" y="688" width="16" height="8"/><use href="#grip" x="1886" y="721" width="16" height="8"/><use href="#grip" x="1886" y="754" width="16" height="8"/><use href="#grip" x="1886" y="787" width="16" height="8"/><use href="#grip" x="1886" y="820" width="16" height="8"/><use href="#grip" x="1886" y="853" width="16" height="8"/><use href="#grip" x="1886" y="886" width="16" height="8"/><use href="#grip" x="1886" y="919" width="16" height="8"/>

<!-- dope sheet -->
<path d="M1 705h1585v237H1z" fill="#fdfdfd"/>
<rect class="b" x="10" y="711" width="39" height="25" rx="4"/><use href="#dope" x="14" y="714" width="19" height="19"/><use href="#ch" x="37" y="719" width="10" height="10"/>
<rect class="b" x="56" y="711" width="159" height="25" rx="4"/><use href="#dope" x="60" y="714" width="19" height="19"/><text x="89" y="722">Dope Sheet</text><use href="#ch" x="202" y="719" width="10" height="10"/>
<text x="230.500" y="722">View</text><text x="281" y="722">Select</text><text x="339" y="722">Marker</text><text x="402" y="722">Channel</text><text x="472.500" y="722">Key</text>
<rect x="1233" y="711" width="73" height="25" rx="4" fill="#dedede"/><use href="#gl" class="pg" x="1233" y="711"/><path d="M1240 716l12 6-4.500 1.500 3 7-3 1-2.500-7-3.500 3z" fill="#1c1c1c"/>
<path d="M1260 719v-3.500h3.500M1264 715.500h3M1274 715.500h4v3.500M1278 722v4M1278 727v3.500h-4M1264 730.500h6M1260 730.500v-5M1260 723v-2" fill="none" stroke="#444" stroke-width="1.200"/><rect x="1264" y="719" width="10" height="8" fill="none" stroke="#444" stroke-dasharray="2 1.500"/>
<path d="M1294 713l9 18h-18z" fill="#1c1c1c"/><path d="M1294 719v7M1294 728v2" stroke="#fff" stroke-width="2"/>
<rect class="b" x="1314" y="711" width="39" height="25" rx="4"/><use href="#flt" x="1316" y="714" width="19" height="19"/><use href="#ch" x="1340" y="719" width="10" height="10"/>
<rect class="b" x="1360" y="711" width="145" height="25" rx="4"/><text x="1369" y="722">Nearest Frame</text><use href="#ch" x="1491" y="719" width="10" height="10"/>
<rect class="b" x="1511" y="711" width="64" height="25" rx="4"/><use href="#gl" class="gy" x="1511" y="711"/><use href="#pd" x="1514" y="714" width="19" height="19"/><use href="#cur" x="1540" y="714" width="19" height="19"/><use href="#chg" x="1562" y="719" width="10" height="10"/>
<rect x="250" y="737" width="1336" height="29" fill="#c8c8c8"/>
<rect x="0" y="737" width="250" height="29" fill="#fdfdfd"/>
<path d="M219 741H9q-5 0-5 5v13q0 4 5 4h210z" fill="#e6e6e6" stroke="#a8a8a8"/><use href="#srch" x="9" y="742" width="19" height="19"/>
<path d="M219 741h23q4 0 4 4v14q0 4-4 4h-23z" fill="#cfcfcf"/><use href="#arr" x="223" y="743" width="19" height="19"/>
<rect x="250" y="766" width="50" height="176" fill="#f0f0f0"/><rect x="300" y="766" width="1237" height="176" fill="#fff"/><rect x="1537" y="766" width="49" height="176" fill="#f0f0f0"/>
<path d="M295 766V928M394 766V928M493 766V928M593 766V928M692 766V928M791 766V928M890 766V928M989 766V928M1088 766V928M1187 766V928M1287 766V928M1386 766V928M1485 766V928" stroke="#e2e2e2"/>
<path d="M345 766V928M444 766V928M543 766V928M642 766V928M741 766V928M841 766V928M940 766V928M1039 766V928M1138 766V928M1237 766V928M1336 766V928M1435 766V928M1534 766V928" stroke="#f2f2f2"/>
<path d="M300 766V928M1537 766V928" stroke="#b0b0b0"/>
<rect x="250" y="766" width="1336" height="2" fill="#fff"/>
<rect x="250" y="768" width="1328" height="20" fill="#d2e9b1"/><rect x="250" y="768" width="50" height="20" fill="#c7dfa8"/><rect x="1537" y="768" width="41" height="20" fill="#c7dfa8"/>
<path d="M1 768h249v22H6q-5 0-5-5z" fill="#8cc63f"/><path d="M5 773h12l-6 8z" fill="#1c1c1c"/><text x="24" y="779">Summary</text>
<rect x="1575" y="748" width="6" height="182" rx="3" fill="#c6c6c6"/><rect x="1574" y="757" width="8" height="16" rx="3" fill="#9a9a9a"/>
<g><text class="n" x="294" y="752">0</text><text class="n" x="393" y="752">20</text><text class="n" x="492" y="752">40</text><text class="n" x="591" y="752">60</text><text class="n" x="690" y="752">80</text><text class="n" x="790" y="752">100</text><text class="n" x="889" y="752">120</text><text class="n" x="988" y="752">140</text><text class="n" x="1087" y="752">160</text><text class="n" x="1186" y="752">180</text><text class="n" x="1285" y="752">200</text><text class="n" x="1386" y="752">220</text><text class="n" x="1485" y="752">240</text></g>
<rect x="548" y="741" width="31" height="22" rx="6" fill="#8cc63f"/><text class="m" x="562.500" y="752">54</text><rect x="561.500" y="762" width="2" height="167" fill="#8cc63f"/>
<rect x="262" y="928" width="1313" height="12" rx="6" fill="#b0b0b0"/><circle cx="266" cy="934" r="4.500" fill="#8c8c8c"/><circle cx="1569" cy="934" r="4.500" fill="#8c8c8c"/>
<path d="M300 940v2M562 940v2" stroke="#8cc63f"/>

<!-- timeline -->
<rect x="1" y="945" width="1585" height="31" fill="#fff"/>
<rect class="b" x="10" y="949" width="39" height="25" rx="4"/><use href="#tl" x="15" y="952" width="19" height="19"/><use href="#ch" x="37" y="957" width="10" height="10"/>
<rect class="b" x="56" y="949" width="164" height="25" rx="4"/><path d="M144.500 949v25" stroke="#e0e0e0"/><text x="66" y="961.500">Playback</text><use href="#ch" x="131" y="957" width="10" height="10"/><text x="154" y="961.500">Keying</text><use href="#ch" x="207" y="957" width="10" height="10"/>
<text x="232" y="961.500">View</text><text x="282" y="961.500">Marker</text>
<rect class="b" x="678" y="949" width="48" height="25" rx="4"/><use href="#gl" class="gy" x="678" y="949"/><circle cx="690" cy="961.500" r="5" fill="#1c1c1c"/><use href="#chg" x="708" y="957" width="10" height="10"/>
<rect class="b" x="734" y="949" width="148" height="25" rx="4"/><path d="M758.500 949v25M783.500 949v25M808 949v25M833 949v25M857.500 949v25" stroke="#e6e6e6"/>
<g fill="#1c1c1c"><path d="M740 955h2.500v13H740zM752 955v13l-8-6.500zM771 961.500l-5-5-5 5 5 5zM772 961.500l6-5v10zM801 955v13l-10-6.500zM815 955l10 6.500-10 6.500zM837 956.500l6 5-6 5zM845 961.500l5-5 5 5-5 5zM863 955l8 6.500-8 6.500zM872.500 955h2.500v13h-2.500z"/></g>
<rect class="f" x="1234" y="949" width="92" height="25" rx="4"/><text class="m" x="1279" y="961">54</text>
<path d="M1357 949h-20q-4 0-4 4v17q0 4 4 4h20z" fill="#c9c9c9"/><use href="#tmr" x="1336" y="952" width="19" height="19"/>
<path d="M1357 949h215q4 0 4 4v17q0 4-4 4h-215z" fill="#e6e6e6" stroke="#a8a8a8"/><path d="M1470 949v25" stroke="#a8a8a8"/>
<text x="1377" y="961">Start</text><text class="e" x="1451" y="961">1</text><text x="1489" y="961">End</text><text class="e" x="1558" y="961">250</text>

<!-- status -->
<rect y="976" width="1920" height="25" fill="#f9f9f9"/>
<use href="#ms" x="15" y="977" width="13" height="21"/><path d="M21 978q-5 0-5 5v3h5z" fill="#a0a0a0"/><text class="st" x="43" y="988.500" style="font-weight:bold" textLength="113" lengthAdjust="spacingAndGlyphs">Select Keyframes</text>
<use href="#ms" x="170" y="977" width="13" height="21"/><path d="M176 978q-5 0-5 5v3h5z" fill="#a0a0a0"/><path d="M186 979v8M189 977v7" stroke="#aaa"/><text class="st" x="200" y="988.500" style="font-weight:bold" textLength="68" lengthAdjust="spacingAndGlyphs">Box Select</text>
<use href="#ms" x="297" y="977" width="13" height="21"/><rect x="302" y="980" width="3" height="6" fill="#a0a0a0"/><text class="st" x="324" y="988.500" style="font-weight:bold" textLength="59" lengthAdjust="spacingAndGlyphs">Pan View</text>
<use href="#ms" x="578" y="977" width="13" height="21"/><path d="M585 978q5 0 5 5v3h-5z" fill="#a0a0a0"/><text class="st" x="605" y="988.500" style="font-weight:bold" textLength="169" lengthAdjust="spacingAndGlyphs">Dope Sheet Context Menu</text>
<text class="st e" x="1910" y="988.500" style="font-weight:bold" textLength="33" lengthAdjust="spacingAndGlyphs">3.0.0</text>

<!-- watermark -->
<text class="wm" x="566" y="752" style="font-size:45px;opacity:.66;stroke-width:1.200" textLength="797" lengthAdjust="spacingAndGlyphs">GUMROAD.COM/BLENDERTHEMES</text>
<g transform="translate(968,786)" opacity=".85" style="filter:drop-shadow(0 1px 2px rgba(0,0,0,.25))"><circle cx="15" cy="15" r="4.500" fill="none" stroke="#fff" stroke-width="2.500"/><path d="M2 15h10M5 9h9M0 22 13 9q7-6 13 0 5 7 0 12-6 6-13 3-3-2-4-5" fill="none" stroke="#fff" stroke-width="3"/></g>
<text class="wm" x="985" y="822" style="font-size:14px;font-weight:normal;text-anchor:middle;opacity:.9;stroke:none">blender</text>
<text class="wm" x="767" y="844" style="font-size:28px;opacity:.88;filter:drop-shadow(0 4px 5px rgba(0,0,0,.35))" textLength="436" lengthAdjust="spacingAndGlyphs">THE BEST PLACE YOU CAN GET</text>
<text class="wm" x="862" y="880" style="font-size:28px;opacity:.88;filter:drop-shadow(0 4px 5px rgba(0,0,0,.35))" textLength="245" lengthAdjust="spacingAndGlyphs">BLENDER THEMES</text>
<text class="wm" x="743" y="907" style="font-size:22px;fill:#fff39a;stroke:#fff39a;opacity:.9" textLength="485" lengthAdjust="spacingAndGlyphs">"ONE TIME PURCHASE, LIFE TIME FREE UPDATE"</text>
<path d="M1509 835v16l4-3.500 3 6.500 2.500-1-3-6.500 5-.5z" fill="#fff" stroke="#222" stroke-width="1"/>

<!-- activation -->
<text class="ns nt" x="1554" y="911" style="font-family:'Liberation Sans',sans-serif;font-size:25px;fill:rgba(110,110,110,.5)" textLength="197" lengthAdjust="spacingAndGlyphs">Activate Windows</text>
<text class="ns nt" x="1554" y="941" style="font-family:'Liberation Sans',sans-serif;font-size:17px;fill:rgba(110,110,110,.5)" textLength="283" lengthAdjust="spacingAndGlyphs">Go to Settings to activate Windows.</text>
</svg>
</body></html>
